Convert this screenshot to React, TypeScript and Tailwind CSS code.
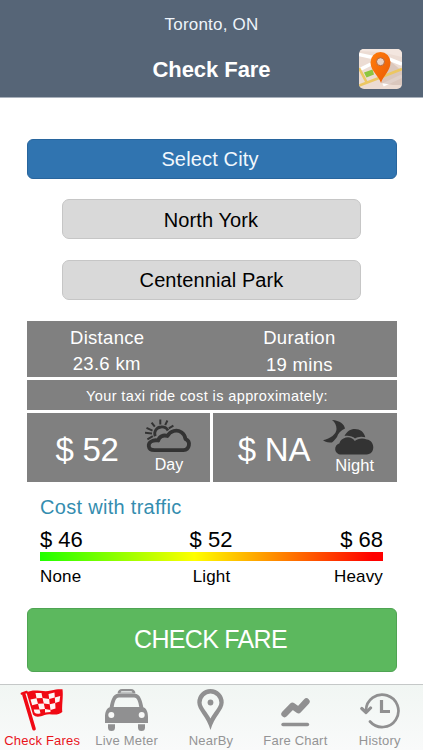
import React from "react";

function MapIcon() {
  return (
    <svg className="block h-10 w-[43px]" viewBox="0 0 43 40">
      <defs>
        <clipPath id="mapClip">
          <rect width="43" height="40" rx="5" />
        </clipPath>
        <linearGradient id="pinFill" x1="0" y1="0" x2="1" y2="1">
          <stop offset="0" stopColor="#ff7d0c" />
          <stop offset="1" stopColor="#ec5a04" />
        </linearGradient>
      </defs>
      <g clipPath="url(#mapClip)">
        <rect width="43" height="40" fill="#ecdcd3" />
        <path d="M0 0H43V8L22 3L0 2Z" fill="#f3e6df" />
        <path d="M0 5.500L14 8.500M30 10L43 15M0 21L12 15M24 36L43 27" stroke="#fff" strokeWidth="3.500" fill="none" />
        <path d="M31 12L43 22V36H34L22 34Z" fill="#d3beb3" opacity=".7" />
        <path d="M-1 37L20 29L43 20M0 19L8 34" stroke="#ecc763" strokeWidth="2.600" fill="none" />
        <path d="M5 23.500L13.500 20.500L15 25.500L7.500 28.500Z" fill="#8cc63f" />
        <path d="M22 34C20 27 11.500 22 11.500 13.200A10 10.200 0 0 1 31.500 13.200C31.500 22 24 27 22 34Z" fill="url(#pinFill)" />
        <circle cx="21.500" cy="12.700" r="4" fill="#e9d2c4" stroke="#b66336" strokeWidth="1" />
      </g>
    </svg>
  );
}

function DayIcon() {
  return (
    <svg className="block h-[34px] w-[48px]" viewBox="0 0 48 34" fill="none" stroke="#333">
      <path
        d="M9.500 31.100H38.500A5.800 5.800 0 0 0 40.500 20C39.700 14 34.200 10.600 28.700 12C25.600 12.800 23.600 14.700 22.500 17C18.300 15.500 14 17.500 13.300 21.500C7.500 20.300 3.300 23.500 3.800 27.200C4.100 29.700 6.300 31.100 9.500 31.100Z"
        strokeWidth="3.800"
        strokeLinejoin="round"
      />
      <path d="M10.200 17.300C8.500 12.500 11.500 8.300 16 8C19.300 7.700 21.800 9.200 23 11.500" strokeWidth="2.800" />
      <path d="M15.300 5.600V0.500M20.200 6.200L22.400 1.500M9.800 7.700L6.600 3.600M23.800 9.400L28.400 6.600M7.500 11.700L1.500 8.900M7 14.400L0 13.700M7.800 17.100L2.400 20.300" strokeWidth="2" />
    </svg>
  );
}

function NightIcon() {
  return (
    <svg className="block h-[35px] w-[51px]" viewBox="0 0 51 35" fill="#333">
      <path d="M9 0C17 .5 21 4 22 8.500C17.500 10.500 15 13.500 14 17C12.800 18.500 11.500 20.500 9 22.600C6.500 22.600 2.500 22.400 0 20.200C7.500 18.800 13.500 14 13.500 9C13.500 5.500 12 2 9 0Z" />
      <path d="M18.500 34.500H43.500C52.500 34.500 52.500 20.500 43.800 19.400C38.500 17.600 34.500 19 31.800 21C29 17 24.500 16.200 20.500 18.500C17.800 19.800 16.700 21.500 16.500 23.200C10 25.500 11 34.500 18.500 34.500Z" />
      <path d="M21.500 15.900C24 11.500 27 9 32 9C37 9 41 11.800 42.300 17.200C38 16.100 34.500 16.800 32 18.500C29.500 16 25.500 15.200 21.500 15.900Z" />
    </svg>
  );
}

function FlagIcon() {
  return (
    <svg className="block h-[43px] w-[44px]" viewBox="0 0 44 43">
      <path d="M4 6L14 39.700" stroke="#f00914" strokeWidth="3.600" strokeLinecap="round" />
      <path d="M1.800 4.600L6.700 3" stroke="#f00914" strokeWidth="2.400" strokeLinecap="round" />
      <path d="M6.500 3.500C15-1 23 4 31 1.500C36 .2 39 .1 42.500 .3C43.500 8 41.500 16 42.300 23C36 28 31 23.500 24.500 26C20 27.800 16 29 13 25.500Z" fill="#f00914" />
      <path
        d="M15.500 4L21.500 4L22.500 9L16.500 9.200ZM28.500 5L34.500 3.600L34.800 8.400L29.200 10ZM10.500 10.500L16.500 9.200L18 14.700L12.200 16.300ZM22.500 9L29.200 10L29.700 15.300L23.800 14.500ZM34.800 8.400L40.200 7L39.500 12.500L35.200 14ZM18 14.700L23.800 14.500L25 20L19.500 20.500ZM29.700 15.300L35.200 14L35.500 19.500L30.500 21ZM13.700 20.500L19.500 20.500L20.500 24.200C18 25.200 16 25 14.500 23.500ZM25 20L30.500 21L30.500 23L25 23.500Z"
        fill="#fff5f3"
      />
    </svg>
  );
}

function TaxiIcon() {
  return (
    <svg className="block h-[42px] w-[43px]" viewBox="0 0 43 42" fill="#909091">
      <path d="M17 0H26Q30 0 30.500 4.500H12.500Q13 0 17 0ZM17 2.200Q15.800 2.200 15.500 3.500H27.500Q27.200 2.200 26 2.200Z" fillRule="evenodd" />
      <path d="M13.500 4.800H29.500C35.500 4.800 37 12 38.300 18.300C41.500 19.500 43 23 43 28V34H0V28C0 23 1.500 19.500 4.700 18.300C6 12 7.500 4.800 13.500 4.800ZM14 8.500C10.500 8.500 9.500 13.500 8.700 18H34.300C33.500 13.500 32.500 8.500 29 8.500Z" fillRule="evenodd" />
      <path d="M3 35.300H10V38.500Q10 42 6.500 42T3 38.500ZM33 35.300H40V38.500Q40 42 36.500 42T33 38.500Z" />
      <circle cx="6.300" cy="26" r="3" fill="#f8f9f8" />
      <circle cx="36.700" cy="26" r="3" fill="#f8f9f8" />
    </svg>
  );
}

function NearByIcon() {
  return (
    <svg className="block h-[41px] w-[27px]" viewBox="0 0 27 41">
      <path d="M13.500 0A13.300 13.300 0 0 0 .3 13.500C.3 21 10 28 13.500 41C17 28 26.700 21 26.700 13.500A13.300 13.300 0 0 0 13.500 0ZM13.500 4.500A9 9 0 0 1 22.400 13.500C22.400 18.500 16 24 13.500 29.500C11 24 4.600 18.500 4.600 13.500A9 9 0 0 1 13.500 4.500Z" fill="#909091" fillRule="evenodd" />
      <circle cx="13.500" cy="13.500" r="2.900" fill="#909091" />
    </svg>
  );
}

function ChartIcon() {
  return (
    <svg className="block h-[29px] w-[29px]" viewBox="0 0 29 29" fill="none" stroke="#909091" strokeLinecap="round" strokeLinejoin="round">
      <path d="M3.500 16L11.500 7.800L17.500 12.200L25.500 3.500" strokeWidth="6.400" />
      <path d="M2 26.500H26.500" strokeWidth="3.400" />
    </svg>
  );
}

function HistoryIcon() {
  return (
    <svg className="block h-[37px] w-[40px]" viewBox="0 0 40 37" fill="none" stroke="#909091">
      <path d="M6 18.500A16.200 16.200 0 1 1 10 29.500" strokeWidth="2.700" strokeLinecap="round" />
      <path d="M1.800 16.500L6.100 20.500L10.500 16" strokeWidth="3.200" strokeLinecap="round" strokeLinejoin="round" />
      <path d="M21.500 8V19.500H30" strokeWidth="3.200" />
    </svg>
  );
}

const tabs = [
  { label: "Check Fares", icon: <FlagIcon />, active: true, pad: "pt-[4px]" },
  { label: "Live Meter", icon: <TaxiIcon />, active: false, pad: "pt-[4px]" },
  { label: "NearBy", icon: <NearByIcon />, active: false, pad: "pt-[4px]" },
  { label: "Fare Chart", icon: <ChartIcon />, active: false, pad: "pt-[13px]" },
  { label: "History", icon: <HistoryIcon />, active: false, pad: "pt-[7px]" },
];

export default function App() {
  return (
    <div className="flex h-[750px] w-[423px] flex-col overflow-hidden bg-white font-['Liberation_Sans',Arial,sans-serif] text-black">
      <header className="h-[98px] shrink-0 border-b border-[#a9b1bc] bg-[#566577] text-white">
        <div className="pt-[15px] text-center text-[17px] leading-5 tracking-[0.200px] text-[#eef4fa]">Toronto, ON</div>
        <div className="mt-[14px] grid h-10 grid-cols-[1fr_auto_1fr] items-center pr-[21px] pl-[21px]">
          <span />
          <h1 className="text-[22px] font-bold tracking-[-0.050px]">Check Fare</h1>
          <div className="flex justify-end">
            <MapIcon />
          </div>
        </div>
      </header>

      <main className="flex flex-1 flex-col px-[26.500px] pt-[41px]">
        <button className="h-[39.500px] shrink-0 rounded-[6px] border border-[#28659d] bg-[#3074b0] pr-[3px] text-[20px] tracking-[0.150px] text-[#f2f8fd]">
          Select City
        </button>
        <button className="mx-[35.500px] mt-5 h-10 shrink-0 rounded-[7px] border border-[#c6c6c6] bg-[#d9d9d9] pt-[2px] pr-px text-[20px] tracking-[0.100px]">
          North York
        </button>
        <button className="mx-[35.500px] mt-[21px] h-10 shrink-0 rounded-[7px] border border-[#c6c6c6] bg-[#d9d9d9] pt-px text-[20px] tracking-[0.100px]">
          Centennial Park
        </button>

        <section className="mt-[21px] flex shrink-0 flex-col gap-[2.500px] text-white">
          <div className="flex h-[56.500px] justify-between bg-[#808080] pt-[7.500px] pr-[61px] pl-[43.500px] text-center text-[18.500px] leading-5 tracking-[0.300px]">
            <div>
              <div>Distance</div>
              <div className="mt-[6px] pr-px">23.6 km</div>
            </div>
            <div>
              <div>Duration</div>
              <div className="mt-[7px]">19 mins</div>
            </div>
          </div>
          <div className="h-[30.500px] bg-[#808080] pr-[9px] text-center text-[14.500px] leading-[33px] tracking-[0.390px]">
            Your taxi ride cost is approximately:
          </div>
          <div className="grid h-[69px] grid-cols-2 gap-[2.500px]">
            <div className="flex bg-[#808080] pl-[29px]">
              <span className="w-[89px] pt-[17.500px] text-[33px] leading-10 tracking-[-0.300px] whitespace-nowrap">$ 52</span>
              <div className="flex w-[48px] flex-col items-center pt-[6px]">
                <DayIcon />
                <span className="mt-[2px] pl-px text-[16px] leading-5">Day</span>
              </div>
            </div>
            <div className="flex bg-[#808080] pl-[25px]">
              <span className="w-[85px] pt-[17.500px] text-[33px] leading-10 tracking-[-0.200px] whitespace-nowrap">$ NA</span>
              <div className="flex w-[51px] flex-col items-center pt-[7px]">
                <NightIcon />
                <span className="pl-[13px] text-[16.500px] leading-5 tracking-[0.100px]">Night</span>
              </div>
            </div>
          </div>
        </section>

        <section className="mt-[15.500px] shrink-0 px-[13.500px]">
          <h2 className="text-[20px] leading-5 tracking-[0.300px] text-[#348daf]">Cost with traffic</h2>
          <div className="mt-[11px] flex justify-between text-[22px] leading-6">
            <span>$ 46</span>
            <span className="pr-px">$ 52</span>
            <span>$ 68</span>
          </div>
          <div className="-mt-[0.500px] h-[9.500px] bg-[linear-gradient(to_right,#20ff00_0%,#ffff00_45%,#ff0000_97%)]" />
          <div className="mt-[5.500px] grid grid-cols-3 text-[17px] leading-5 tracking-[0.150px]">
            <span>None</span>
            <span className="text-center">Light</span>
            <span className="text-right">Heavy</span>
          </div>
        </section>

        <button className="mt-[21.500px] h-[63.500px] shrink-0 rounded-[6px] border border-[#4fa453] bg-[#5cb85e] pr-[2px] text-[25px] tracking-[-0.700px] text-white">
          CHECK FARE
        </button>
      </main>

      <nav className="grid h-[66px] shrink-0 grid-cols-5 border-t border-[#c5c8c8] bg-linear-to-b from-[#f1f6f3] to-[#f9fafa] pr-px">
        {tabs.map((tab) => (
          <div
            key={tab.label}
            className={`flex flex-col items-center text-[13px] leading-4 whitespace-nowrap tracking-[0.200px] ${tab.active ? "text-[#e9131b]" : "text-[#949495]"}`}
          >
            <div className={`h-[48px] ${tab.pad}`}>{tab.icon}</div>
            <span>{tab.label}</span>
          </div>
        ))}
      </nav>
    </div>
  );
}
